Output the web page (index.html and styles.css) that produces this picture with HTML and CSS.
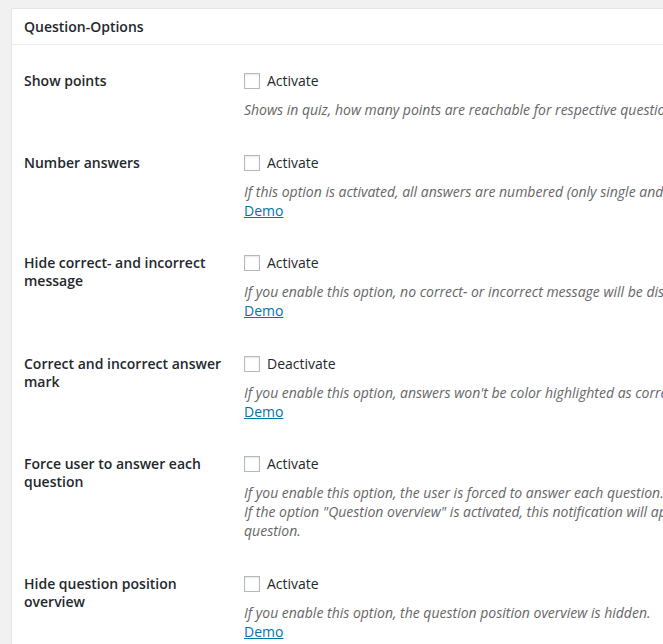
FILE: index.html
```html
<!DOCTYPE html>
<html>
<head>
<meta charset="utf-8">
<link rel="stylesheet" href="styles.css">
</head>
<body>
<div class="postbox">
  <h3 class="hndle">Question-Options</h3>
  <div class="inside">
    <div class="row">
      <div class="th">Show points</div>
      <div class="td">
        <label class="check"><input type="checkbox"> Activate</label>
        <p class="description">Shows in quiz, how many points are reachable for respective question.</p>
      </div>
    </div>
    <div class="row">
      <div class="th">Number answers</div>
      <div class="td">
        <label class="check"><input type="checkbox"> Activate</label>
        <p class="description">If this option is activated, all answers are numbered (only single and multiple choice)<br><a href="#">Demo</a></p>
      </div>
    </div>
    <div class="row">
      <div class="th">Hide correct- and incorrect message</div>
      <div class="td">
        <label class="check"><input type="checkbox"> Activate</label>
        <p class="description">If you enable this option, no correct- or incorrect message will be displayed.<br><a href="#">Demo</a></p>
      </div>
    </div>
    <div class="row">
      <div class="th">Correct and incorrect answer mark</div>
      <div class="td">
        <label class="check"><input type="checkbox"> Deactivate</label>
        <p class="description">If you enable this option, answers won't be color highlighted as correct or incorrect.<br><a href="#">Demo</a></p>
      </div>
    </div>
    <div class="row">
      <div class="th">Force user to answer each question</div>
      <div class="td">
        <label class="check"><input type="checkbox"> Activate</label>
        <p class="description">If you enable this option, the user is forced to answer each question.<br>If the option "Question overview" is activated, this notification will appear after end of the quiz, if any<br>question.</p>
      </div>
    </div>
    <div class="row">
      <div class="th">Hide question position overview</div>
      <div class="td">
        <label class="check"><input type="checkbox"> Activate</label>
        <p class="description">If you enable this option, the question position overview is hidden.<br><a href="#">Demo</a></p>
      </div>
    </div>
  </div>
</div>
</body>
</html>
```
FILE: styles.css
```css
html, body {
  margin: 0;
  padding: 0;
  background: #f1f1f1;
  overflow: hidden;
  height: 644px;
}
body {
  font-family: "Open Sans", "Liberation Sans", sans-serif;
  font-size: 14px;
  color: #23282d;
  padding: 8px 0 0 11px;
}
.postbox {
  width: 1000px;
  background: #fff;
  border: 1px solid #e5e5e5;
  box-shadow: 0 1px 1px rgba(0,0,0,.04);
}
.hndle {
  margin: 0;
  font-size: 14px;
  font-weight: 600;
  line-height: 19px;
  padding: 8px 12px;
  border-bottom: 1px solid #eee;
}
.inside {
  padding: 7px 12px 12px;
}
.row {
  display: grid;
  grid-template-columns: 210px 1fr;
}
.th {
  font-weight: 600;
  line-height: 18px;
  padding: 20px 10px 14.5px 0;
}
.td {
  padding: 20px 10px 14.5px 10px;
}
.check {
  display: flex;
  align-items: center;
  line-height: 18px;
  height: 18px;
  white-space: nowrap;
}
.check input {
  appearance: none;
  -webkit-appearance: none;
  width: 16px;
  height: 16px;
  margin: 0 7px 0 0;
  border: 1px solid #b4b9be;
  background: #fff;
  box-shadow: inset 0 1px 2px rgba(0,0,0,.1);
  box-sizing: border-box;
}
.description {
  margin: 10px 0 0;
  font-size: 14px;
  font-style: italic;
  color: #666;
  line-height: 19px;
  white-space: nowrap;
}
.description a {
  color: #0073aa;
  font-style: normal;
  text-decoration: underline;
}
```
